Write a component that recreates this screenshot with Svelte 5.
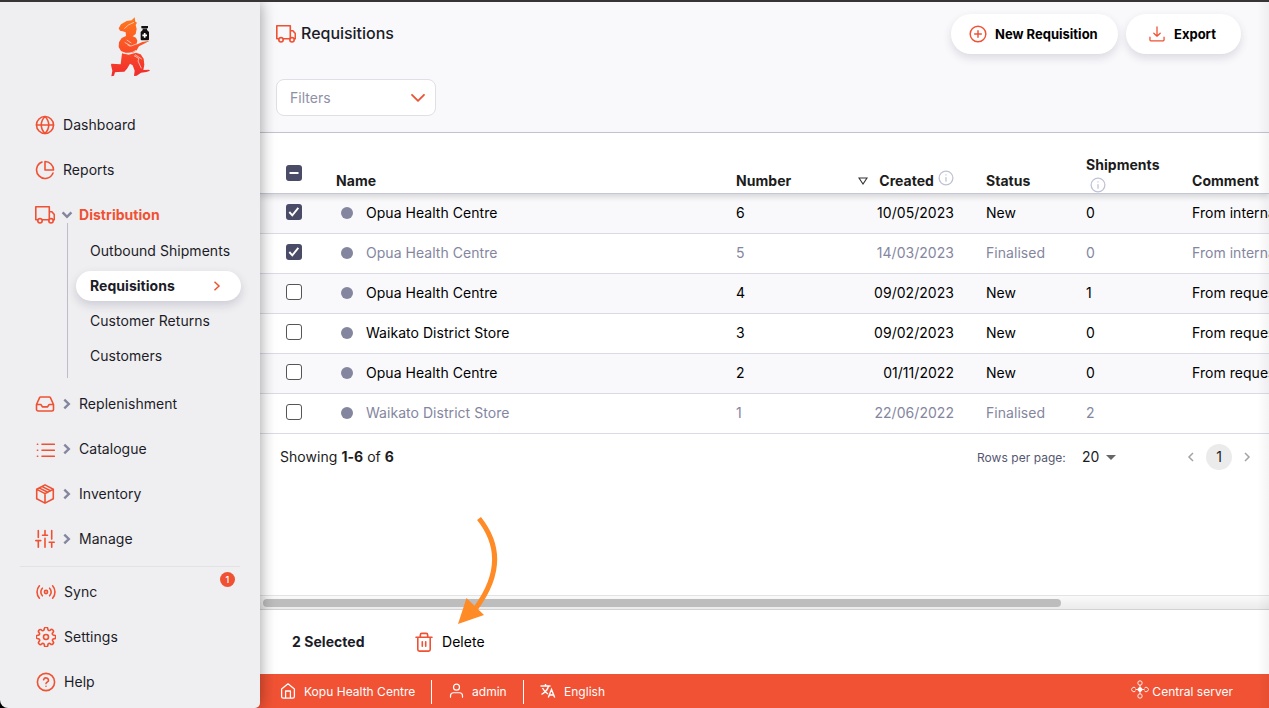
<script>
  const top = [
    { icon: 'globe', label: 'Dashboard' },
    { icon: 'pie', label: 'Reports' },
  ];
  const sub = ['Outbound Shipments', 'Requisitions', 'Customer Returns', 'Customers'];
  const groups = [
    { icon: 'inbox', label: 'Replenishment' },
    { icon: 'list', label: 'Catalogue' },
    { icon: 'box', label: 'Inventory' },
    { icon: 'sliders', label: 'Manage' },
  ];
  const bottom = [
    { icon: 'sync', label: 'Sync', badge: 1 },
    { icon: 'gear', label: 'Settings' },
    { icon: 'help', label: 'Help' },
  ];
  const rows = [
    { name: 'Opua Health Centre', number: 6, created: '10/05/2023', status: 'New', shipments: 0, comment: 'From internal order', checked: true },
    { name: 'Opua Health Centre', number: 5, created: '14/03/2023', status: 'Finalised', shipments: 0, comment: 'From internal order', checked: true },
    { name: 'Opua Health Centre', number: 4, created: '09/02/2023', status: 'New', shipments: 1, comment: 'From request requisition' },
    { name: 'Waikato District Store', number: 3, created: '09/02/2023', status: 'New', shipments: 0, comment: 'From request requisition' },
    { name: 'Opua Health Centre', number: 2, created: '01/11/2022', status: 'New', shipments: 0, comment: 'From request requisition' },
    { name: 'Waikato District Store', number: 1, created: '22/06/2022', status: 'Finalised', shipments: 2, comment: '' },
  ];
</script>

{#snippet icon(name, size = 20)}
  <svg class="icon" width={size} height={size} viewBox="0 0 20 20" fill="none" stroke="currentColor" stroke-width="1.6" stroke-linecap="round" stroke-linejoin="round">
    {#if name === 'globe'}
      <circle cx="10" cy="10" r="8.5" /><path d="M1.5 10h17M10 1.5c5 5 5 12 0 17M10 1.5c-5 5-5 12 0 17" />
    {:else if name === 'pie'}
      <path d="M7 2a8.5 8.5 0 1 0 11 11" /><path d="M10 1.5V10h8.5A8.5 8.5 0 0 0 10 1.5z" />
    {:else if name === 'truck'}
      <path d="M3 14.800H.8V1.800h13.500v13H7.200M14.300 6.800h2.600l2.400 2.800v5.200h-1.100" /><circle cx="5" cy="15.800" r="2.200" /><circle cx="16" cy="15.800" r="2.200" />
    {:else if name === 'inbox'}
      <path d="M1.5 10.5h4.3l1.8 2.4h4.8l1.8-2.4h4.3M4.6 3.6 1.5 10.5v4.8a1.7 1.7 0 0 0 1.7 1.7h13.6a1.7 1.7 0 0 0 1.7-1.7v-4.8l-3.1-6.9a1.2 1.2 0 0 0-1-.6H5.6a1.2 1.2 0 0 0-1 .6z" />
    {:else if name === 'list'}
      <path d="M7 5.2h12.3M7 11.2h12.3M7 17.2h12.3M2.4 5.2h.3M2.4 11.2h.3M2.4 17.2h.3" />
    {:else if name === 'box'}
      <path d="M10 .9l8.3 4.4v9.4L10 19.1l-8.3-4.4V5.3zM1.9 5.4 10 9.6l8.1-4.2M10 9.6v9.2M4.5 4.1l8.3 4.2M7.2 2.6l8.3 4.2" />
    {:else if name === 'sliders'}
      <path d="M3.3 1.5v7M3.3 11.6v6.6M.8 11.6h5M10 1.5v4.7M7.5 6.2h5M10 9.3v8.9M16.7 1.5v8.6M16.7 13.2v5M14.2 13.2h5" />
    {:else if name === 'sync'}
      <circle cx="10" cy="10" r="1.6" /><path d="M6.4 6.2a5.4 5.4 0 0 0 0 7.6M13.6 6.2a5.4 5.4 0 0 1 0 7.6M3.4 3.8a9.3 9.3 0 0 0 0 12.4M16.6 3.8a9.3 9.3 0 0 1 0 12.4" />
    {:else if name === 'gear'}
      <circle cx="10" cy="10" r="2.5" />
      <path transform="translate(-.7 -.7) scale(.892)" stroke-width="1.800" d="M19.400 15a1.650 1.650 0 0 0 .33 1.820l.06.06a2 2 0 0 1-2.830 2.830l-.06-.06a1.650 1.650 0 0 0-2.800 1.170V21a2 2 0 0 1-4 0v-.09A1.650 1.650 0 0 0 7.180 19.730l-.06.06a2 2 0 0 1-2.830-2.830l.06-.06A1.650 1.650 0 0 0 3.180 14H3a2 2 0 0 1 0-4h.09A1.650 1.650 0 0 0 4.270 7.180l-.06-.06a2 2 0 0 1 2.830-2.830l.06.06A1.650 1.650 0 0 0 10 3.180V3a2 2 0 0 1 4 0v.09a1.650 1.650 0 0 0 2.820 1.170l.06-.06a2 2 0 0 1 2.830 2.830l-.06.06A1.650 1.650 0 0 0 20.820 10H21a2 2 0 0 1 0 4h-.09a1.650 1.650 0 0 0-1.510 1z" />
    {:else if name === 'help'}
      <circle cx="10" cy="10" r="8.6" /><path d="M7.6 7.7a2.5 2.5 0 0 1 4.9.7c0 1.6-2.5 1.9-2.5 3.2M10 14.2v.1" />
    {:else if name === 'plus'}
      <circle cx="10" cy="10" r="8.7" /><path d="M10 6.300v7.400M6.300 10h7.400" />
    {:else if name === 'download'}
      <path d="M10 1v11.5M6 9l4 3.7L14 9M1.2 14v3.2a1.5 1.5 0 0 0 1.5 1.5h14.6a1.5 1.5 0 0 0 1.5-1.5V14" />
    {:else if name === 'info'}
      <circle cx="10" cy="10" r="8.600" /><path d="M10 9.500v4.500M10 6v.2" />
    {:else if name === 'trash'}
      <path d="M2 5.3h16M3.8 5.3v12.200a1.6 1.6 0 0 0 1.6 1.6h9.2a1.6 1.6 0 0 0 1.6-1.6V5.3M6.3 5.3V3a1.6 1.6 0 0 1 1.6-1.6h4.2A1.6 1.6 0 0 1 13.700 3v2.300M8.300 9.800v4.400M11.700 9.800v4.400" />
    {:else if name === 'home'}
      <path d="M2 7.5 10 1l8 6.500V17a2 2 0 0 1-2 2H4a2 2 0 0 1-2-2zM7 18.500V10h6v8.500" />
    {:else if name === 'user'}
      <circle cx="10" cy="5.5" r="4" /><path d="M2 19v-2a4 4 0 0 1 4-4h8a4 4 0 0 1 4 4v2" />
    {/if}
  </svg>
{/snippet}

{#snippet chevron()}
  <svg class="chev" width="8" height="12" viewBox="0 0 8 12" fill="none" stroke="#8486a0" stroke-width="2.4"><path d="M1.3 1.6 5.800 6 1.300 10.400" /></svg>
{/snippet}

<div class="app">
  <aside>
    <div class="logo">
      <svg width="40" height="60" viewBox="330 51 120 180">
        <defs>
          <linearGradient id="flame" x1="0" y1="51" x2="0" y2="231" gradientUnits="userSpaceOnUse">
            <stop offset="0" stop-color="#ff7a1c" /><stop offset=".5" stop-color="#fb5127" /><stop offset="1" stop-color="#ef2b2d" />
          </linearGradient>
        </defs>
        <g fill="url(#flame)">
          <path d="M404 52l2 13 5 3-4 7 3 12-3 15-9 7 10 4 4 9-3 12 18-8 22-4-14 8-18 9-7 12-11 7-22 1-14-6-7-12 1-14 8-13 13-6-1-11-9-3-8-2-4-7 7-12 17-10 15-2z" />
          <path d="M366 160l20 4 22-6 14 5 9 13 2 18-3 16 17-1 3 3-11 4-16 2-13 9-8 1 2-16-6-16-8-5-9 15-8 9-20 1-8 1-3 10-8 2 3-17-4-17 1-4 14 1 14 1z" />
        </g>
        <path d="M373 86l12-11 17-8M374 127l19 11 16-6M380 120l14 9M382 134l9 5M365 157q24 8 43-6M402 167l15 9-3 7 10 22M405 164l20 13" fill="none" stroke="#f8dfdb" stroke-width="2.2" />
        <path d="M424 78h20v7h-3v5l6 6v22q0 3-3 3h-19q-3 0-3-3V96l6-6v-5h-4z" fill="#111" />
        <path d="M434 99v14M427 106h14" stroke="#fff" stroke-width="5" /><path d="M427 86h14" stroke="#aaa" stroke-width="2" />
      </svg>
    </div>
    {#each top as item}
      <div class="nav"><span class="ico">{@render icon(item.icon)}</span><span>{item.label}</span></div>
    {/each}
    <div class="nav open">
      <span class="ico">{@render icon('truck')}</span>
      <span class="arrow down">{@render chevron()}</span><span>Distribution</span>
    </div>
    <div class="sub">
      {#each sub as label}
        <div class="subitem" class:active={label === 'Requisitions'}>
          <span>{label}</span>
          {#if label === 'Requisitions'}
            <svg width="8" height="12" viewBox="0 0 8 12" fill="none" stroke="#f05133" stroke-width="1.5"><path d="M1.5 1.8 6 6 1.5 10.2" /></svg>
          {/if}
        </div>
      {/each}
    </div>
    {#each groups as item}
      <div class="nav"><span class="ico">{@render icon(item.icon)}</span><span class="arrow">{@render chevron()}</span><span>{item.label}</span></div>
    {/each}
    <hr />
    {#each bottom as item}
      <div class="nav low"><span class="ico">{@render icon(item.icon)}</span><span>{item.label}</span>{#if item.badge}<b class="badge">{item.badge}</b>{/if}</div>
    {/each}
  </aside>

  <main>
    <header>
      <div class="bar">
        <h1>{@render icon('truck')}<span>Requisitions</span></h1>
        <div class="buttons">
          <button class="new">{@render icon('plus', 18)}<span>New Requisition</span></button>
          <button class="export">{@render icon('download', 16)}<span>Export</span></button>
        </div>
      </div>
      <div class="filters">
        <span>Filters</span>
        <svg width="16" height="10" viewBox="0 0 16 10" fill="none" stroke="#f05133" stroke-width="1.8" stroke-linecap="round" stroke-linejoin="round"><path d="M2 1.800 8 7.800l6-6" /></svg>
      </div>
    </header>

    <div class="table">
      <div class="row head">
        <span class="check"><i class="box on"><svg width="16" height="16" viewBox="0 0 16 16"><path d="M3.5 8h9" stroke="#fff" stroke-width="2" /></svg></i></span>
        <span>Name</span><span>Number</span>
        <span class="created"><svg class="sort" width="10" height="8" viewBox="0 0 10 8" fill="none" stroke="#333" stroke-width="1.1"><path d="M1 1h8L5 7z" /></svg><span>Created</span><em>{@render icon('info', 16)}</em></span>
        <span class="status">Status</span>
        <span class="ship">Shipments<em>{@render icon('info', 16)}</em></span>
        <span>Comment</span>
      </div>
      {#each rows as r}
        <div class="row" class:final={r.status === 'Finalised'}>
          <span class="check"><i class="box" class:on={r.checked}>{#if r.checked}<svg width="16" height="16" viewBox="0 0 16 16" fill="none"><path d="M3.3 8l3 3.3L12.3 3.8" stroke="#fff" stroke-width="1.9" /></svg>{/if}</i></span>
          <span class="name"><i class="dot"></i>{r.name}</span>
          <span>{r.number}</span>
          <span class="created">{r.created}</span>
          <span class="status">{r.status}</span>
          <span>{r.shipments}</span>
          <span>{r.comment}</span>
        </div>
      {/each}
      <div class="pager">
        <span class="showing">Showing <b>1-6</b> of <b>6</b></span>
        <span class="rpp">Rows per page:</span>
        <span class="count">20</span>
        <svg class="caret" width="10" height="5" viewBox="0 0 10 5"><path d="M0 0h10L5 5z" fill="#666" /></svg>
        <svg class="prev" width="8" height="10" viewBox="0 0 8 10" fill="none" stroke="#a3a3a3" stroke-width="1.5"><path d="M6 1 2 5l4 4" /></svg>
        <span class="page">1</span>
        <svg width="8" height="10" viewBox="0 0 8 10" fill="none" stroke="#a3a3a3" stroke-width="1.5"><path d="M2 1l4 4-4 4" /></svg>
      </div>
    </div>

    <div class="scroll"><div class="thumb"></div></div>
    <div class="actions">
      <b>2 Selected</b>
      <span class="delete">{@render icon('trash')}<span>Delete</span></span>
    </div>
    <footer>
      <span class="cell store">{@render icon('home', 16)}<span>Kopu Health Centre</span></span>
      <span class="cell admin">{@render icon('user', 15)}<span>admin</span></span>
      <span class="cell lang">
        <svg width="16" height="16" viewBox="0 0 16 16" fill="none" stroke="#fff" stroke-width="1.4"><path d="M.5 3h10M5.5 1v2M2.5 5q2 4 5.500 6M8.500 3q-1 5-7 8.500M8.300 14.500 11.500 6.500l3.200 8M9.500 12h4" /></svg>
        <span>English</span>
      </span>
      <span class="central">
        <svg width="18" height="19" viewBox="0 0 18 19" fill="none" stroke="#fff" stroke-width=".9"><circle cx="9" cy="9.5" r="2" fill="#fff" /><path d="M9 5v9M4.5 9.5h9" /><circle cx="9" cy="3" r="2.2" /><circle cx="9" cy="16" r="2.2" /><path d="M4.600 8.200A2.200 2.200 0 1 0 4.600 10.800M13.400 8.200a2.200 2.200 0 1 1 0 2.600" /></svg>
        <span>Central server</span>
      </span>
    </footer>
    <div class="edge"></div>
    <svg class="pointer" width="50" height="115" viewBox="0 0 50 115"><path d="M23 7.500C45 35 43.500 65 20 97" fill="none" stroke="#ff8b27" stroke-width="5" /><path d="M2 113 10.500 87 28 104z" fill="#ff8b27" /></svg>
  </main>
</div>

<style>
  :global(body) { margin: 0; background: #000; }
  * { box-sizing: border-box; }
  .app { width: 1269px; height: 708px; display: flex; border-top: 2px solid #373536; overflow: hidden; font: 14px/20px Inter, sans-serif; letter-spacing: .04px; color: #1c1c28; background: linear-gradient(90deg, #000 130px, #f15234 130px); }
  svg { display: block; flex: none; }
  i { font-style: normal; }
  aside { width: 260px; flex: none; background: #efeff1; border-radius: 0 0 5px 8px; box-shadow: 0 0 16px rgba(0, 0, 0, .4); position: relative; z-index: 2; }
  .logo { height: 100px; padding: 15px 0 0 110px; }
  .nav { height: 45px; display: flex; align-items: center; padding-left: 35px; color: #1c1c28; }
  .ico { color: #f05133; width: 28px; }
  .low { padding-left: 36px; }
  .arrow { width: 16px; display: flex; }
  .down .chev { transform: rotate(90deg); }
  .open { color: #f05133; font-weight: 700; }
  .sub { margin: -14px 19px 3px 67px; padding: 13px 0 0 8px; height: 155px; border-left: 1px solid #bcbcca; }
  .subitem { height: 30px; margin-bottom: 5px; border-radius: 15px; padding: 0 0 0 14px; display: flex; align-items: center; justify-content: space-between; white-space: nowrap; }
  .active { background: #fff; font-weight: 700; padding-right: 20px; box-shadow: 0 4px 10px rgba(60, 60, 100, .2); }
  hr { border: 0; height: 1px; background: #e2e2e6; margin: 5px 20px 2px; }
  .badge { width: 15px; height: 15px; border-radius: 50%; background: #f05133; color: #fff; font-size: 9px; line-height: 15px; text-align: center; margin: -24px 25px 0 auto; font-weight: 500; }

  main { width: 1009px; display: flex; flex-direction: column; background: #fff; position: relative; overflow: hidden; }
  header { height: 131px; flex: none; background: #f9f9fc; border-bottom: 1px solid #c5c7d4; padding: 12px 28px 0 16px; }
  .bar { display: flex; justify-content: space-between; height: 65px; }
  h1 { margin: 10px 0 0; font-size: 16px; font-weight: 500; line-height: 20px; height: 20px; display: flex; gap: 5px; color: #f05133; letter-spacing: -.02px; }
  h1 span { color: #1c1c28; line-height: 18px; }
  .buttons { display: flex; gap: 8px; }
  button { border: 0; background: #fff; height: 40px; border-radius: 20px; box-shadow: 0 4px 8px rgba(60, 60, 80, .16); display: flex; align-items: center; font: 700 13px Inter, sans-serif; color: #f05133; padding: 0 0 0 18px; }
  button span { color: #000; }
  .new { width: 167px; gap: 8px; }
  .export { width: 115px; padding-left: 23px; gap: 9px; }
  .filters { width: 160px; height: 37px; border: 1px solid #dfdfe8; border-radius: 8px; background: #fff; display: flex; align-items: center; justify-content: space-between; padding: 0 9px 0 13px; color: #8f90a6; }

  .table { height: 462px; flex: none; }
  .row { display: grid; grid-template-columns: 76px 400px 114px 104px 132px 106px 200px; height: 40px; align-items: center; border-bottom: 1px solid #dadbe5; white-space: nowrap; color: #000; padding-bottom: 1px; }
  .row:nth-child(even) { background: #f9f9fc; }
  .row.final { color: #8486a0; }
  .row.head { height: 61px; border-bottom: 1px solid #c5c7d4; align-items: end; font-weight: 700; color: #1c1c1c; padding-bottom: 2px; box-shadow: 0 3px 6px rgba(0, 0, 0, .14); position: relative; }
  .check { padding-left: 26px; }
  .head .check { padding-bottom: 10px; }
  .box { display: block; width: 16px; height: 16px; border: 1px solid #555; border-radius: 3px; background: #fff; margin-top: -2px; }
  .box.on { border: 0; background: #4a4b67; }
  .name { display: flex; align-items: center; }
  .dot { width: 12px; height: 12px; border-radius: 50%; background: #8486a0; margin: 0 13px 0 5px; }
  .created { text-align: right; }
  .head .created { display: flex; justify-content: flex-end; align-items: flex-end; }
  .sort { margin: 0 11px 6px 0; }
  em { color: #bfc2d4; }
  .created em { margin: 0 0 5px 4px; }
  .status { padding-left: 32px; }
  .ship em { display: block; padding: 2px 0 0 4px; margin-bottom: -2px; }
  .pager { display: flex; align-items: center; height: 46px; padding: 0 18px 0 20px; color: #1c1c1c; }
  .showing { width: 697px; }
  .rpp { font-size: 12px; color: #555770; width: 105px; padding-top: 1px; }
  .count { width: 24px; }
  .prev { margin-left: 71px; }
  .page { width: 26px; height: 26px; border-radius: 50%; background: #ebebeb; text-align: center; line-height: 26px; margin: 0 11px; }

  .scroll { height: 15px; flex: none; border-top: 1px solid #e3e3e3; border-bottom: 1px solid #d2d2d2; background: linear-gradient(#fafafa, #ebebeb); padding: 3px; }
  .thumb { width: 798px; height: 8px; border-radius: 4px; background: #bdbdbd; }
  .actions { height: 64px; flex: none; display: flex; align-items: center; padding-left: 32px; }
  .actions b { width: 122px; }
  .delete { display: flex; gap: 8px; color: #f05133; }
  .delete span { color: #000; }
  footer { height: 34px; flex: none; background: #f15234; color: #fff; display: flex; align-items: center; font-size: 12px; letter-spacing: .02px; padding: 1px 0 0 20px; }
  .cell { height: 24px; display: flex; align-items: center; gap: 8px; }
  .cell span { padding-top: 1px; }
  .cell svg { margin-top: -2px; }
  .store { width: 152px; border-right: 1px solid #fff; }
  .admin { width: 92px; padding-left: 17px; border-right: 1px solid #fff; }
  .lang { padding-left: 16px; }
  .central { margin: 0 36px 0 auto; display: flex; align-items: center; gap: 3px; }
  .central span { padding-top: 1px; }
  .central svg { margin-top: -4px; }
  .edge { position: absolute; right: 0; top: 0; width: 12px; height: 100%; background: linear-gradient(90deg, transparent, rgba(0, 0, 0, .045)); }
  .pointer { position: absolute; left: 196px; top: 509px; }
</style>
